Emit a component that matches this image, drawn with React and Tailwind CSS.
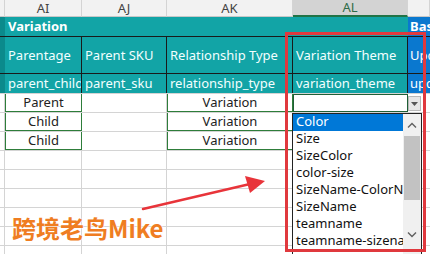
const cols = [5, 77, 85, 126, 115, 22];
const font = { fontFamily: '"Noto Sans", "Liberation Sans", sans-serif' };

const headers = ["", "AI", "AJ", "AK", "AL", ""];
const names = ["Parentage", "Parent SKU", "Relationship Type", "Variation Theme"];
const codes = ["parent_child", "parent_sku", "relationship_type", "variation_theme"];
const rows = [
  ["Parent", "Variation"],
  ["Child", "Variation"],
  ["Child", "Variation"],
];
const options = [
  "Color",
  "Size",
  "SizeColor",
  "color-size",
  "SizeName-ColorName",
  "SizeName",
  "teamname",
  "teamname-sizename",
];

function Cell({ w, className = "", children }) {
  return (
    <div
      className={`shrink-0 overflow-hidden whitespace-nowrap ${className}`}
      style={{ width: w }}
    >
      {children}
    </div>
  );
}

export default function App() {
  return (
    <div
      className="relative h-[254px] w-[430px] overflow-hidden bg-white text-[13px] leading-none"
      style={font}
    >
      {/* column letters */}
      <div className="flex h-[17px] bg-[#f2f2f2]">
        {headers.map((h, i) => (
          <div
            key={i}
            className={`flex shrink-0 items-center justify-center whitespace-nowrap border-r border-[#d4d4d4] ${
              h === "AL"
                ? "border-b-2 border-b-[#217346] bg-[#d3d3d3] text-[#2f6b47]"
                : "border-b border-b-[#c8c8c8] text-[#444]"
            }`}
            style={{ width: cols[i] }}
          >
            {h}
          </div>
        ))}
      </div>

      {/* group row */}
      <div className="flex h-[19px]">
        <Cell w={5} className="bg-[#0b8a8c]" />
        <div className="flex w-[403px] items-center bg-[#12a4a6] pl-[3px] font-bold text-white">
          Variation
        </div>
        <Cell w={22} className="flex items-center bg-[#0a78cf] pl-[2px] font-bold text-white">
          Bas
        </Cell>
      </div>

      {/* label row */}
      <div className="flex h-[37px] border-t border-[#1a1a1a]">
        <Cell w={5} className="bg-[#0b8a8c]" />
        {names.map((n, i) => (
          <Cell
            key={n}
            w={cols[i + 1]}
            className="flex items-center border-r border-[#1a1a1a] bg-[#12a4a6] pl-[3px] text-[#f2ffff]"
          >
            {n}
          </Cell>
        ))}
        <Cell w={22} className="flex items-center bg-[#0a78cf] pl-[2px] text-white">
          Upd
        </Cell>
      </div>

      {/* code row */}
      <div className="flex h-[20px] border-t border-[#1a1a1a]">
        <Cell w={5} className="bg-[#0b8a8c]" />
        {codes.map((c, i) => (
          <Cell
            key={c}
            w={cols[i + 1]}
            className="flex items-center border-r border-[#1a1a1a] bg-[#12a4a6] pl-[3px] text-[#f2ffff]"
          >
            {c}
          </Cell>
        ))}
        <Cell w={22} className="flex items-center bg-[#0a78cf] pl-[2px] text-white">
          upd
        </Cell>
      </div>

      {/* data rows */}
      {Array.from({ length: 9 }).map((_, r) => {
        const d = rows[r];
        return (
          <div key={r} className="flex h-[19px] border-t border-[#d4d4d4]">
            <Cell w={5} className="border-r border-[#d4d4d4]" />
            <Cell
              w={77}
              className={`flex items-center justify-center text-[#222] ${
                d ? "border-x border-b border-[#2e7d3a]" : "border-r border-[#d4d4d4]"
              }`}
            >
              {d && d[0]}
            </Cell>
            <Cell w={85} className="border-r border-[#d4d4d4]" />
            <Cell
              w={126}
              className={`flex items-center justify-center text-[#222] ${
                d ? "border-x border-b border-[#2e7d3a]" : "border-r border-[#d4d4d4]"
              }`}
            >
              {d && d[1]}
            </Cell>
            <Cell
              w={115}
              className={r === 0 ? "border border-[#1f5f36]" : "border-r border-[#d4d4d4]"}
            />
            <Cell w={22} />
          </div>
        );
      })}

      {/* dropdown button */}
      <div className="absolute left-[408px] top-[96px] flex h-[15px] w-[13px] items-center justify-center border border-[#b8b8b8] bg-[#e6e6e6]">
        <svg width="7" height="4" viewBox="0 0 7 4">
          <path d="M0 0h7L3.5 4z" fill="#555" />
        </svg>
      </div>

      {/* dropdown list */}
      <div className="absolute left-[292px] top-[113px] flex h-[142px] w-[130px] border border-[#222] bg-white">
        <div className="flex flex-1 flex-col overflow-hidden">
          {options.map((o, i) => (
            <div
              key={o}
              className={`h-[17px] shrink-0 whitespace-nowrap pl-[3px] pt-[1px] ${
                i === 0 ? "h-[16px] bg-[#0078d7] text-white" : "text-[#111]"
              }`}
            >
              {o}
            </div>
          ))}
        </div>
        <div className="flex w-[18px] flex-col bg-[#f0f0f0]">
          <div className="flex h-[18px] items-center justify-center pt-[4px]">
            <svg width="10" height="6" viewBox="0 0 10 6">
              <path d="M1 5.5L5 1.5l4 4" fill="none" stroke="#606060" strokeWidth="1.4" />
            </svg>
          </div>
          <div className="mx-[1px] mt-[4px] h-[64px] bg-[#c2c2c2]" />
          <div className="flex-1" />
          <div className="mb-[12px] flex h-[14px] items-center justify-center">
            <svg width="10" height="6" viewBox="0 0 10 6">
              <path d="M1 0.5l4 4 4-4" fill="none" stroke="#606060" strokeWidth="1.4" />
            </svg>
          </div>
        </div>
      </div>

      {/* red highlight box */}
      <div className="absolute left-[285px] top-[32px] h-[220px] w-[141px] border-[3px] border-[#e0393e]" />

      {/* arrow */}
      <svg className="absolute left-0 top-0" width="430" height="254" viewBox="0 0 430 254">
        <path d="M143 209L250 184" stroke="#e8343a" strokeWidth="2.5" strokeLinecap="round" />
        <path d="M245 176L265 181L250 193Z" fill="#e8343a" />
      </svg>

      {/* watermark */}
      <div
        className="absolute left-[12px] top-[216px] text-[24px] font-bold leading-none text-[#ef7d22]"
        style={{
          fontFamily: '"Noto Sans CJK SC", "Noto Sans", sans-serif',
          textShadow: "0 0 2px #fff, 0 0 2px #fff",
        }}
      >
        跨境老鸟Mike
      </div>
    </div>
  );
}
